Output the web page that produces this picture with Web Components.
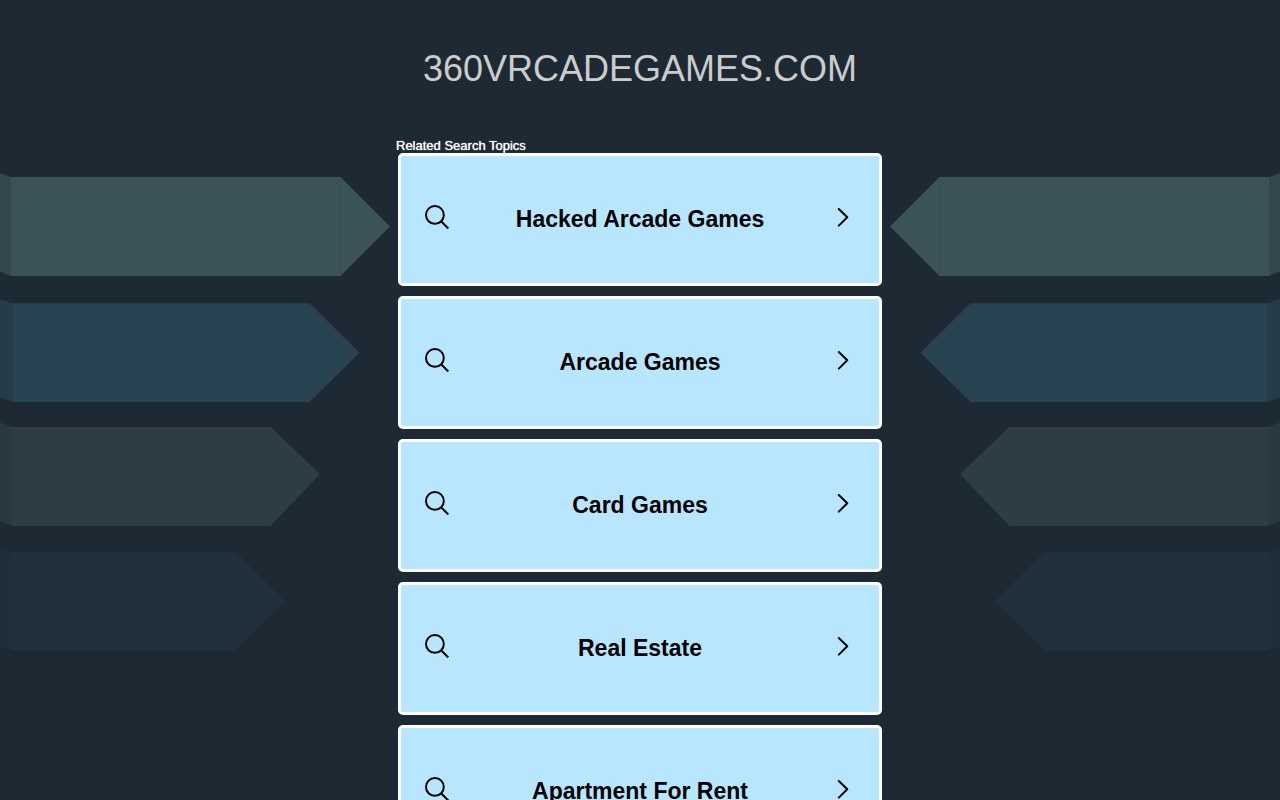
<!DOCTYPE html>
<html lang="en">
<head>
<meta charset="utf-8">
<meta name="viewport" content="width=device-width, initial-scale=1">
<title>360vrcadegames.com</title>
<style>
  body { margin: 0; background: #1e2a33; font-family: "Liberation Sans", Arial, sans-serif; }
</style>
</head>
<body>
<parking-page>
  <span slot="domain">360VRCADEGAMES.COM</span>
  <topic-list heading="Related Search Topics">
    <topic-card href="#hacked-arcade-games">Hacked Arcade Games</topic-card>
    <topic-card href="#arcade-games">Arcade Games</topic-card>
    <topic-card href="#card-games">Card Games</topic-card>
    <topic-card href="#real-estate">Real Estate</topic-card>
    <topic-card href="#apartment-for-rent">Apartment For Rent</topic-card>
  </topic-list>
</parking-page>

<template id="page">
  <style>
    :host {
      display: grid;
      grid-template-columns: minmax(0, 1fr) minmax(0, 488px) minmax(0, 1fr);
      grid-template-rows: auto auto;
    }
    header { grid-column: 1 / -1; grid-row: 1; padding: 48px 16px; text-align: center; }
    h1 { margin: 0; font-size: 36px; line-height: 41px; font-weight: 400; color: #ccc; }
    main { grid-column: 2; grid-row: 2; padding-bottom: 48px; }
    .left { grid-column: 1; grid-row: 1 / -1; }
    .right { grid-column: 3; grid-row: 1 / -1; }
  </style>
  <arrow-bands class="left"></arrow-bands>
  <arrow-bands class="right" mirrored></arrow-bands>
  <header><h1><slot name="domain"></slot></h1></header>
  <main><slot></slot></main>
</template>

<template id="bands">
  <style>
    :host { display: flex; justify-content: flex-start; align-items: flex-start; overflow: hidden; }
    :host([mirrored]) { justify-content: flex-end; }
    svg { display: block; flex: none; }
    :host([mirrored]) svg { transform: scaleX(-1); }
  </style>
  <svg width="396" height="680" viewBox="0 0 396 680" aria-hidden="true">
    <path fill="#33474e" d="M0 173 11 177V276L0 271.500Z"/>
    <path fill="#3b5357" d="M11 177H340.500L390 226.500 340.500 276H11Z"/>
    <path stroke="#374e53" d="M340.500 178V275"/>
    <path fill="#253d4a" d="M0 299 13 303.500V402L0 397.500Z"/>
    <path fill="#284452" d="M13 303.300H309.500L359.500 352.500 309.500 402H13Z"/>
    <path stroke="#27414f" d="M309.500 304V401"/>
    <path fill="#283940" d="M0 422.500 12 427V526L0 521.500Z"/>
    <path fill="#2c3e44" d="M12 427H270.500L320 474 270.500 526H12Z"/>
    <path fill="#1f2e3a" d="M0 548 12 552.500V650.500L0 646Z"/>
    <path fill="#20303c" d="M12 552.300H236L285.500 601.500 236 650.500H12Z"/>
    <path stroke="#1f2e3a" d="M235.500 553V650"/>
  </svg>
</template>

<template id="list">
  <style>
    :host { display: block; }
    h2 { margin: 0; padding-top: 1px; font-size: 13px; line-height: 15px; font-weight: 400; color: #fff; text-shadow: 0 0 1px #fff; }
    div { display: flex; flex-direction: column; gap: 10px; padding: 0 2px; }
  </style>
  <h2></h2>
  <div><slot></slot></div>
</template>

<template id="card">
  <style>
    :host { display: block; }
    a {
      display: flex; align-items: center; gap: 16px;
      box-sizing: border-box; min-height: 133px; padding: 0 24px 2px;
      border: 3px solid #fff; border-radius: 5px;
      background: #b8e6fe; color: #000; text-decoration: none;
    }
    a:hover { background: #d2effe; }
    span { flex: 1; text-align: center; font-size: 23px; line-height: 28px; font-weight: 700; }
    svg { flex: none; margin-bottom: 4px; fill: none; stroke: #000; stroke-width: 2; }
  </style>
  <a>
    <svg width="24" height="24" viewBox="0 0 24 24" aria-hidden="true">
      <circle cx="9.900" cy="9.900" r="8.900"/><path d="M15.800 16 23.300 23.500"/>
    </svg>
    <span><slot></slot></span>
    <svg width="24" height="24" viewBox="0 0 24 24" aria-hidden="true">
      <path d="M7.800 4 16.300 12.300 7.800 20.600" stroke-linecap="round" stroke-linejoin="round"/>
    </svg>
  </a>
</template>

<script>
  class TemplateElement extends HTMLElement {
    constructor() {
      super();
      const template = document.getElementById(this.constructor.template);
      this.attachShadow({ mode: "open" }).append(template.content.cloneNode(true));
    }
  }

  class ArrowBands extends TemplateElement {
    static template = "bands";
  }

  class TopicCard extends TemplateElement {
    static template = "card";
    connectedCallback() {
      this.shadowRoot.querySelector("a").href = this.getAttribute("href");
    }
  }

  class TopicList extends TemplateElement {
    static template = "list";
    connectedCallback() {
      this.shadowRoot.querySelector("h2").textContent = this.getAttribute("heading");
    }
  }

  class ParkingPage extends TemplateElement {
    static template = "page";
  }

  customElements.define("arrow-bands", ArrowBands);
  customElements.define("topic-card", TopicCard);
  customElements.define("topic-list", TopicList);
  customElements.define("parking-page", ParkingPage);
</script>
</body>
</html>
